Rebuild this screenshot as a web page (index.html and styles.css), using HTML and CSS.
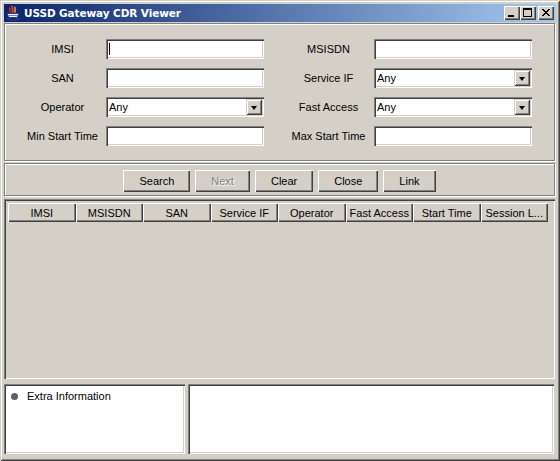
FILE: index.html
```html
<!DOCTYPE html>
<html>
<head>
<meta charset="utf-8">
<title>USSD Gateway CDR Viewer</title>
<link rel="stylesheet" href="styles.css">
</head>
<body>
<div class="window">
  <div class="titlebar">
    <svg class="app-icon" width="16" height="16" viewBox="0 0 16 16">
      <path d="M7.5 0.8 C5.2 3 9.8 4.2 7.2 7.6" stroke="#e8401c" stroke-width="1.8" fill="none"/>
      <path d="M10.2 1.8 C8.8 3.6 11.6 4.8 9.6 7.6" stroke="#f59a2a" stroke-width="1.5" fill="none"/>
      <path d="M5 2.8 C3.8 4.5 6.2 5.6 5 7.6" stroke="#d83010" stroke-width="1.4" fill="none"/>
      <path d="M2 8.5 H14 L12.3 12.5 H3.7 Z" fill="#f0f0f4" stroke="#2c3c88" stroke-width="1"/>
      <path d="M3.2 10.5 H12.8" stroke="#6a7ac0" stroke-width="1"/>
      <path d="M1 13.2 C4 15.8 12 15.8 15 13.2" stroke="#2c3c88" stroke-width="1.4" fill="none"/>
      <path d="M5 12.5 L4 15 M11 12.5 L12 15" stroke="#2c3c88" stroke-width="1"/>
    </svg>
    <span class="title">USSD Gateway CDR Viewer</span>
    <div class="ctrls">
      <span class="cbtn"><svg width="16" height="14" viewBox="0 0 16 14" shape-rendering="crispEdges"><rect x="4" y="9" width="6" height="2" fill="#000"/></svg></span>
      <span class="cbtn"><svg width="16" height="14" viewBox="0 0 16 14" shape-rendering="crispEdges"><path d="M3 2 H12 V11 H3 Z M4 4 V10 H11 V4 Z" fill="#000" fill-rule="evenodd"/></svg></span>
      <span class="cbtn close"><svg width="16" height="14" viewBox="0 0 16 14" shape-rendering="crispEdges"><path d="M4 3 h2 v1 h1 v1 h2 v-1 h1 v-1 h2 v1 h-1 v1 h-1 v1 h-1 v1 h1 v1 h1 v1 h1 v1 h-2 v-1 h-1 v-1 h-2 v1 h-1 v1 h-2 v-1 h1 v-1 h1 v-1 h1 v-1 h-1 v-1 h-1 v-1 h-1 z" fill="#000"/></svg></span>
    </div>
  </div>

  <div class="content">
    <div class="panel form-panel">
      <div class="form-grid">
        <label class="lbl lbl-l">IMSI</label>
        <div class="field"><span class="caret"></span></div>
        <label class="lbl lbl-r">MSISDN</label>
        <div class="field"></div>

        <label class="lbl lbl-l">SAN</label>
        <div class="field"></div>
        <label class="lbl lbl-r">Service IF</label>
        <div class="field combo"><span class="combo-text">Any</span><span class="arrow-btn"><span class="arrow"></span></span></div>

        <label class="lbl lbl-l">Operator</label>
        <div class="field combo"><span class="combo-text">Any</span><span class="arrow-btn"><span class="arrow"></span></span></div>
        <label class="lbl lbl-r">Fast Access</label>
        <div class="field combo"><span class="combo-text">Any</span><span class="arrow-btn"><span class="arrow"></span></span></div>

        <label class="lbl lbl-l">Min Start Time</label>
        <div class="field"></div>
        <label class="lbl lbl-r">Max Start Time</label>
        <div class="field"></div>
      </div>
    </div>

    <div class="panel button-panel">
      <button class="btn">Search</button>
      <button class="btn disabled">Next</button>
      <button class="btn">Clear</button>
      <button class="btn">Close</button>
      <button class="btn">Link</button>
    </div>

    <div class="table-pane">
      <div class="thead">
        <div class="th">IMSI</div>
        <div class="th">MSISDN</div>
        <div class="th">SAN</div>
        <div class="th">Service IF</div>
        <div class="th">Operator</div>
        <div class="th">Fast Access</div>
        <div class="th">Start Time</div>
        <div class="th">Session L...</div>
      </div>
    </div>

    <div class="split">
      <div class="pane pane-left">
        <div class="tree-item"><span class="bullet"></span><span>Extra Information</span></div>
      </div>
      <div class="divider"></div>
      <div class="pane pane-right"></div>
    </div>
  </div>
</div>
</body>
</html>
```

FILE: styles.css
```css
* { box-sizing: border-box; }
html, body { margin: 0; padding: 0; }
body {
  font-family: "Liberation Sans", Arial, sans-serif;
  font-size: 11px;
  color: #000;
  background: #d4d0c8;
}

.window {
  width: 560px;
  height: 461px;
  background: #d4d0c8;
  padding: 4px;
  display: flex;
  flex-direction: column;
  box-shadow: inset 1px 1px 0 #d4d0c8, inset -1px -1px 0 #404040,
              inset 2px 2px 0 #ffffff, inset -2px -2px 0 #808080;
}

/* title bar */
.titlebar {
  height: 18px;
  flex: 0 0 18px;
  display: flex;
  align-items: center;
  background: linear-gradient(to right, #0a246a, #a6caf0);
}
.app-icon { margin-left: 1px; flex: 0 0 16px; display: block; }
.title {
  margin-left: 3px;
  color: #fff;
  font-family: "DejaVu Sans", Verdana, sans-serif;
  font-weight: bold;
  font-size: 10.5px;
  letter-spacing: -0.1px;
}
.ctrls {
  margin-left: auto;
  margin-right: 2px;
  display: flex;
}
.cbtn {
  width: 16px;
  height: 14px;
  background: #d4d0c8;
  box-shadow: inset 1px 1px 0 #ffffff, inset -1px -1px 0 #404040, inset -2px -2px 0 #808080;
  display: block;
}
.cbtn svg { display: block; }
.cbtn.close { margin-left: 2px; }

/* content */
.content {
  flex: 1;
  display: flex;
  flex-direction: column;
  padding-top: 1px;
}

.panel {
  border: 1px solid #808080;
  box-shadow: inset 1px 1px 0 #ffffff, 1px 1px 0 #ffffff;
  margin-right: 1px;
}

.form-panel {
  height: 138px;
  flex: 0 0 138px;
  padding-top: 15px;
}
.form-grid {
  margin-left: 23px;
  display: grid;
  grid-template-columns: 78px 158px 110px 158px;
  grid-auto-rows: 20px;
  row-gap: 9px;
}
.lbl {
  display: flex;
  align-items: center;
  justify-content: center;
  white-space: nowrap;
}
.lbl-l { padding-right: 9px; }
.lbl-r { padding-left: 19px; }

.field {
  background: #fff;
  box-shadow: inset 1px 1px 0 #808080, inset 2px 2px 0 #404040,
              inset -1px -1px 0 #ffffff, inset -2px -2px 0 #d4d0c8;
  position: relative;
}
.caret {
  position: absolute;
  left: 3px;
  top: 4px;
  width: 1px;
  height: 12px;
  background: #000;
}
.combo {
  display: flex;
  align-items: center;
  padding: 2px;
}
.combo-text { padding-left: 1px; }
.arrow-btn {
  margin-left: auto;
  width: 16px;
  height: 16px;
  background: #d4d0c8;
  box-shadow: inset 1px 1px 0 #d4d0c8, inset -1px -1px 0 #404040,
              inset 2px 2px 0 #ffffff, inset -2px -2px 0 #808080;
  display: flex;
  align-items: center;
  justify-content: center;
}
.arrow {
  width: 0;
  height: 0;
  border-left: 3.5px solid transparent;
  border-right: 3.5px solid transparent;
  border-top: 4px solid #000;
  margin-top: 1px;
}

/* buttons */
.button-panel {
  margin-top: 2px;
  height: 33px;
  flex: 0 0 33px;
  display: flex;
  justify-content: center;
  align-items: flex-start;
  gap: 5px;
  padding-top: 6px;
}
.btn {
  height: 22px;
  padding: 0 16px;
  border: none;
  background: #d4d0c8;
  font-family: "Liberation Sans", Arial, sans-serif;
  font-size: 11px;
  color: #000;
  box-shadow: inset 1px 1px 0 #ffffff, inset -1px -1px 0 #404040, inset -2px -2px 0 #808080;
}
.btn.disabled {
  color: #808080;
  text-shadow: 1px 1px 0 #ffffff;
}

/* table */
.table-pane {
  margin-top: 3px;
  margin-right: 1px;
  height: 180px;
  flex: 0 0 180px;
  padding: 2px 0 0 2px;
  background: #d4d0c8;
  box-shadow: inset 1px 1px 0 #808080, inset 2px 2px 0 #404040,
              inset -1px -1px 0 #ffffff, inset -2px -2px 0 #d4d0c8;
}
.thead {
  display: flex;
  height: 19px;
  margin-top: 2px;
  margin-left: 2px;
}
.th {
  flex: 0 0 67.5px;
  display: flex;
  align-items: center;
  justify-content: center;
  white-space: nowrap;
  overflow: hidden;
  box-shadow: inset 1px 1px 0 #ffffff, inset -1px -1px 0 #404040, inset -2px -2px 0 #808080;
}

/* split pane */
.split {
  margin-top: 5px;
  height: 70px;
  flex: 0 0 70px;
  display: flex;
  margin-right: 2px;
}
.pane {
  background: #fff;
  box-shadow: inset 1px 1px 0 #808080, inset 2px 2px 0 #404040,
              inset -1px -1px 0 #ffffff, inset -2px -2px 0 #d4d0c8;
}
.pane-left {
  flex: 0 0 181px;
  padding: 4px 0 0 7px;
}
.divider { flex: 0 0 3px; }
.pane-right { flex: 1; }

.tree-item {
  display: flex;
  align-items: center;
  height: 16px;
}
.bullet {
  width: 7px;
  height: 7px;
  border-radius: 50%;
  background: #606060;
  margin-right: 9px;
}
```
